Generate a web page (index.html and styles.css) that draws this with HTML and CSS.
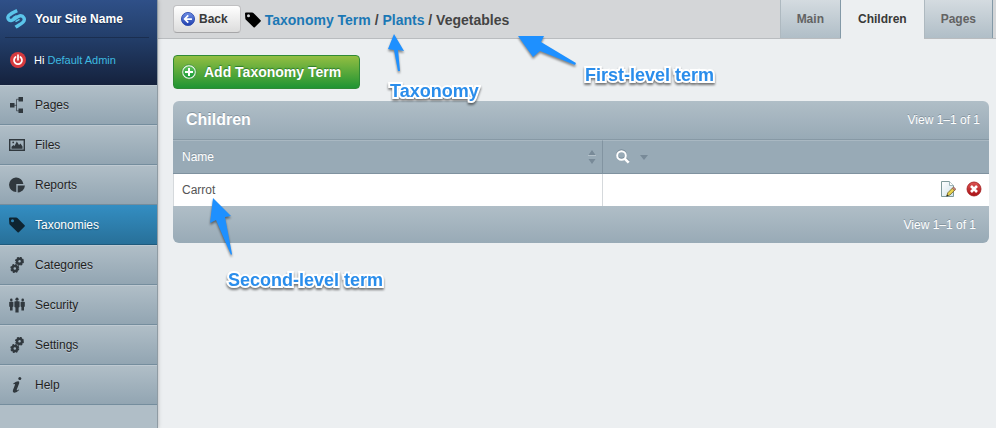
FILE: index.html
```html
<!DOCTYPE html>
<html lang="en">
<head>
<meta charset="utf-8">
<title>Vegetables - Taxonomies</title>
<link rel="stylesheet" href="styles.css">
</head>
<body>
<svg class="defs" aria-hidden="true">
  <defs>
    <linearGradient id="blueBall" x1="0" y1="0" x2="0" y2="1"><stop offset="0" stop-color="#6f8fe6"/><stop offset="1" stop-color="#1f3fae"/></linearGradient>
    <linearGradient id="redBall" x1="0" y1="0" x2="0" y2="1"><stop offset="0" stop-color="#dd5555"/><stop offset="1" stop-color="#a90f14"/></linearGradient>
    <linearGradient id="greenBall" x1="0" y1="0" x2="0" y2="1"><stop offset="0" stop-color="#5cc25c"/><stop offset="1" stop-color="#159a35"/></linearGradient>
    <linearGradient id="paper" x1="0" y1="0" x2="1" y2="1"><stop offset="0" stop-color="#ffffff"/><stop offset="1" stop-color="#cfe3ea"/></linearGradient>
    <symbol id="tag" viewBox="0 0 16 16"><path fill-rule="evenodd" d="M1 0.5h6.2q.7 0 1.2.5l7.2 7.2q.6.6 0 1.2l-5.8 5.9q-.6.6-1.2 0L.9 7.8Q.4 7.3.3 6.600L0 1.500Q0 .5 1 .5zM3.500 2.300a1.500 1.500 0 1 0 0 3a1.500 1.500 0 1 0 0-3z"/></symbol>
    <symbol id="gears" viewBox="0 0 16 16">
      <g fill="none" stroke="currentColor">
        <circle cx="10.500" cy="4.300" r="2.500" stroke-width="2.400"/>
        <circle cx="10.500" cy="4.300" r="3.800" stroke-width="1.400" stroke-dasharray="1.800 1.184"/>
        <circle cx="5.800" cy="11.500" r="2.500" stroke-width="2.400"/>
        <circle cx="5.800" cy="11.500" r="3.800" stroke-width="1.400" stroke-dasharray="1.800 1.184"/>
      </g>
    </symbol>
  </defs>
</svg>
<div class="app">
  <aside class="sidebar">
    <header class="brand-block">
      <a class="brand" href="#">
        <svg class="logo" viewBox="0 0 22 22" aria-hidden="true"><path d="M12.200 2.600C8.500 4.200 5.300 5.900 3.600 7.700C1.800 10.100 3.900 13.200 6.600 12.400C9.500 11.300 11.800 8.700 14.700 7.900C18.600 7.200 20.700 11.400 18.100 14.100C16.300 15.900 13 17.400 10.500 19.200" fill="none" stroke="#5bc5ea" stroke-width="3.400"/><path d="M7.800 9.900 11.600 7.600M10.500 13.700 14.600 11.300" fill="none" stroke="#5bc5ea" stroke-width="1.500"/></svg>
        <span>Your Site Name</span>
      </a>
      <div class="login">
        <a class="power-link" href="#" aria-label="Log out"><svg class="power" viewBox="0 0 16 16"><circle cx="8" cy="8" r="8" fill="#d63a3e"/><path d="M5.600 5a4 4 0 1 0 4.800 0M8 3.200v4.600" fill="none" stroke="#fff" stroke-width="1.700" stroke-linecap="round"/></svg></a>
        <span>Hi <a href="#">Default Admin</a></span>
      </div>
    </header>
    <nav>
      <ul class="menu">
        <li><a href="#"><svg viewBox="0 0 16 16"><path d="M1 6h4.500v4.500H1zM9.500 0H14v4.500H9.500zM9.500 11.500H14V16H9.500z"/><path d="M5 8.300h3M10 2.300H7.500v11.500H10" fill="none" stroke="currentColor" stroke-opacity=".7"/></svg>Pages</a></li>
        <li><a href="#"><svg viewBox="0 0 16 16"><path d="M.7 2.700h14.600v10.600H.7z" fill="none" stroke="currentColor" stroke-width="1.400"/><path d="M2.500 11.700v-2L4.500 8l1 1 2.300-4.500L10 8l1.500-1.500 2 3v2.200z"/><circle cx="4.200" cy="5.400" r=".9"/></svg>Files</a></li>
        <li><a href="#"><svg viewBox="0 0 16 16"><path d="M7.300 8V15A7.200 7.200 0 1 1 14.400 7.100H7.300z"/><path d="M8.700 8.600h7.200a7 7 0 0 1-2.200 4.900l-3 1.700-2 .4z"/></svg>Reports</a></li>
        <li class="current"><a href="#" aria-current="page"><svg><use href="#tag"/></svg>Taxonomies</a></li>
        <li><a href="#"><svg><use href="#gears"/></svg>Categories</a></li>
        <li><a href="#"><svg viewBox="0 0 16 16"><circle cx="2.300" cy="2.900" r="1.300"/><circle cx="8" cy="2.200" r="1.600"/><circle cx="13.700" cy="2.900" r="1.300"/><path d="M.2 5q2.100-1 4.200 0v4.600l-.8.400v3.500H1V10L.2 9.600zM5.400 4.600q2.600-1.200 5.200 0v5.400l-1 .5V15.500H6.400v-5l-1-.5zM11.600 5q2.100-1 4.200 0v4.600l-.8.400v3.500h-2.600V10l-.8-.4z"/></svg>Security</a></li>
        <li><a href="#"><svg><use href="#gears"/></svg>Settings</a></li>
        <li><a href="#"><svg viewBox="0 0 16 16"><circle cx="10.800" cy="1.500" r="1.500"/><path d="M4.200 6.600Q7.500 4.200 9.300 4.300q1.300.2.900 1.900L7.800 12.600q-.5 1.500 1.900-.2l.5.700Q7.500 16 5.200 15.800q-1.900-.3-1.300-2.500L6 7.700q.2-.9-1.500-.4z"/></svg>Help</a></li>
      </ul>
    </nav>
  </aside>

  <main class="content">
    <header class="topbar">
      <a class="back" href="#"><svg viewBox="0 0 16 16" aria-hidden="true"><circle cx="8" cy="8" r="7.500" fill="url(#blueBall)" stroke="#2d49ad"/><path d="M8.300 3.800 4.200 8l4.100 4.200M4.500 8h8" fill="none" stroke="#fff" stroke-width="2"/></svg>Back</a>
      <svg class="crumb-icon" aria-hidden="true"><use href="#tag"/></svg>
      <h2 class="crumbs"><a href="#">Taxonomy Term</a> / <a href="#">Plants</a> / <span>Vegetables</span></h2>
      <nav class="tabs">
        <a href="#">Main</a>
        <a class="active" href="#" aria-current="page">Children</a>
        <a href="#">Pages</a>
      </nav>
    </header>

    <section class="panel">
      <button class="add" type="button"><svg viewBox="0 0 16 16" aria-hidden="true"><circle cx="8" cy="8" r="7.300" fill="#e8f6e3" stroke="#3a8a3a" stroke-width=".8"/><circle cx="8" cy="8" r="5.800" fill="url(#greenBall)"/><path d="M8 4v8M4 8h8" stroke="#fff" stroke-width="2"/></svg>Add Taxonomy Term</button>

      <table class="grid">
        <colgroup><col class="col-name"><col></colgroup>
        <thead>
          <tr class="title"><th colspan="2"><div class="bar"><h3>Children</h3><span>View 1–1 of 1</span></div></th></tr>
          <tr class="heads">
            <th><button class="sort" type="button">Name<svg viewBox="0 0 8 14" aria-hidden="true"><path d="M4 0l3.500 5h-7zM4 14l3.500-5h-7z" fill="#788a98"/><path d="M0 5.500h8" stroke="#b4c1ca"/></svg></button></th>
            <th><button class="search" type="button" aria-label="Filter"><svg class="lens" viewBox="0 0 14 14"><circle cx="5.500" cy="5.500" r="4.300" fill="none" stroke="#fff" stroke-width="2"/><path d="M8.700 8.700l4 4" stroke="#fff" stroke-width="2.600"/></svg><svg class="caret" viewBox="0 0 8 5"><path d="M0 0h8L4 5z" fill="#788a98"/></svg></button></th>
          </tr>
        </thead>
        <tbody>
          <tr>
            <td>Carrot</td>
            <td><div class="actions">
              <a href="#" aria-label="Edit"><svg viewBox="0 0 16 16"><path d="M1.500.5h8l4 4v11h-12z" fill="url(#paper)" stroke="#7e9a9a"/><path d="M9.500.5v4h4" fill="#fff" stroke="#9db5b8"/><path d="M6.800 15l1-3.200L13 6.600l2.200 2.100L9.900 14z" fill="#e8d44d" stroke="#7a6a2b" stroke-width=".9"/><path d="M12.300 7.300L13.600 6l2.200 2-1.400 1.500z" fill="#c98579" stroke="#85564e" stroke-width=".6"/><path d="M6.500 15.500l.6-2 1.300 1.300z" fill="#222"/></svg></a>
              <button type="button" aria-label="Delete"><svg viewBox="0 0 16 16"><circle cx="8" cy="8" r="7" fill="url(#redBall)" stroke="#a01818" stroke-width=".8"/><path d="M5 5l6 6M11 5l-6 6" stroke="#fff" stroke-width="2.600"/></svg></button>
            </div></td>
          </tr>
        </tbody>
        <tfoot><tr><td colspan="2">View 1–1 of 1</td></tr></tfoot>
      </table>
    </section>
  </main>

  <div class="notes">
    <svg class="arrows" aria-hidden="true">
      <path d="M394 34l10 17-6-1 2 21h-2l-4-21-6-1z"/>
      <path d="M518 36l26 0-3 6 35 21-1 2-35-14-7 6z"/>
      <path d="M213 198l18 18-6 1 7 37-1 1-15-35-6 3z"/>
    </svg>
    <span class="note note-taxonomy">Taxonomy</span>
    <span class="note note-first">First-level term</span>
    <span class="note note-second">Second-level term</span>
  </div>
</div>
</body>
</html>
```

FILE: styles.css
```css
* { box-sizing: border-box; }

body {
  margin: 0;
  background: #eceff1;
  color: #444;
  font: 12px/16px "Liberation Sans", Arial, sans-serif;
}

a { color: inherit; text-decoration: none; }
h2, h3, ul { margin: 0; padding: 0; }
button { font: inherit; color: inherit; border: 0; background: none; padding: 0; cursor: pointer; }
svg { display: block; flex: none; width: 16px; height: 16px; fill: currentColor; }
.defs { position: absolute; width: 0; height: 0; }

.app { position: relative; display: flex; min-height: 100vh; overflow: hidden; }

/* Sidebar */
.sidebar {
  flex: none;
  width: 158px;
  background: #b0bec7;
  border-right: 1px solid #8f9ba3;
  box-shadow: 0 0 4px rgba(0, 0, 0, .25);
  z-index: 1;
}
.brand-block { background: linear-gradient(#2f5088, #24406d 40%, #15223d); }
.brand {
  display: flex;
  align-items: center;
  gap: 8px;
  height: 38px;
  margin: 0 8px 0 5px;
  border-bottom: 1px solid #1a2e50;
  color: #fff;
  font-weight: bold;
  text-shadow: 0 1px 1px #16294a;
}
.logo { width: 22px; height: 22px; }
.login {
  display: flex;
  align-items: center;
  gap: 8px;
  height: 47px;
  padding: 0 0 4px 10px;
  color: #fff;
  font-size: 11px;
}
.login span a { color: #3ebae0; }

.menu { list-style: none; }
.menu a {
  display: flex;
  align-items: center;
  gap: 10px;
  height: 40px;
  padding-left: 9px;
  background: linear-gradient(#b0bec7, #92a5b2);
  border-top: 1px solid #bfcad2;
  border-bottom: 1px solid #748d9d;
  color: #1f1f1f;
  text-shadow: 0 1px 0 #bfcad2;
}
.menu svg { color: #30383e; }
.menu .current a {
  background: linear-gradient(#338dc1, #287099);
  border-top-color: #338dc1;
  border-bottom-color: #1f5a7c;
  color: #fff;
  text-shadow: 0 1px 1px #1e5270;
}
.menu .current svg { color: #0e2431; }

/* Header */
.content { flex: 1; min-width: 0; }
.topbar {
  display: flex;
  align-items: center;
  height: 39px;
  padding: 0 3px 0 15px;
  background: #d4d6d8;
  border-bottom: 1px solid #b9bcbf;
}
.back {
  display: flex;
  align-items: center;
  gap: 4px;
  height: 28px;
  padding: 0 12px 0 7px;
  border: 1px solid #c0c0c2;
  border-bottom-color: #a6a6a8;
  border-radius: 4px;
  background: linear-gradient(#fff, #dcdcdc);
  color: #393939;
  font-weight: bold;
}
.back svg { width: 14px; height: 14px; }
.crumb-icon { margin: 2px 4px 0; color: #000; }
.crumbs { flex: 1; padding-top: 2px; font-size: 14px; white-space: nowrap; color: #444; }
.crumbs a { color: #1b78b5; }
.tabs { display: flex; align-self: stretch; }
.tabs a {
  height: 38px;
  padding: 0 16px;
  border-left: 1px solid #aeb9c0;
  border-right: 1px solid #8399a7;
  background: linear-gradient(#d4dbe0, #b0bec7);
  color: #636363;
  font-weight: bold;
  line-height: 38px;
}
.tabs .active {
  height: 39px;
  border-color: #eceff1;
  background: #eceff1;
  color: #393939;
}

/* Body */
.panel { padding: 16px 7px 0 15px; }
.add {
  display: flex;
  align-items: center;
  gap: 7px;
  height: 34px;
  margin-bottom: 12px;
  padding: 0 18px 0 7px;
  border: 1px solid #2f8a35;
  border-radius: 4px;
  background: linear-gradient(#93be42, #1f9433);
  color: #fff;
  font-size: 14px;
  font-weight: bold;
  text-shadow: 0 -1px 1px #2b7a2b;
}

.grid {
  width: 100%;
  table-layout: fixed;
  border-collapse: separate;
  border-spacing: 0;
  border-radius: 6px;
  overflow: hidden;
  text-align: left;
}
.col-name { width: 52.7%; }
.grid th, .grid td { padding: 0 9px; font-weight: normal; }
.title th {
  height: 39px;
  border-bottom: 1px solid #8799a5;
  background: linear-gradient(#b0bec7, #98aab6);
}
.bar {
  display: flex;
  align-items: center;
  justify-content: space-between;
  padding-left: 4px;
  color: #fff;
  text-shadow: 0 -1px 0 #84949f;
}
.bar h3 { font-size: 16px; }
.heads th {
  height: 34px;
  border-top: 1px solid #a9b8c2;
  border-bottom: 1px solid #7f929f;
  background: #98aab6;
  color: #fff;
}
.heads th:first-child { border-right: 1px solid #8294a1; }
.sort {
  display: flex;
  align-items: center;
  justify-content: space-between;
  width: 100%;
  text-shadow: 0 -1px 0 #84949f;
}
.sort svg { width: 8px; height: 14px; margin-right: -3px; }
.search { display: flex; align-items: center; gap: 10px; padding-left: 4px; }
.lens { width: 14px; height: 14px; filter: drop-shadow(0 -1px 0 #788a98); }
.caret { width: 8px; height: 5px; }
.grid tbody td { height: 32px; background: #fff; color: #555; }
.grid tbody td:first-child { border-right: 1px solid #d5d9dc; border-left: 1px solid #d5d9dc; padding-left: 8px; }
.actions { display: flex; justify-content: flex-end; gap: 10px; margin-right: -2px; padding-bottom: 3px; }
.grid tfoot td {
  height: 37px;
  padding-right: 13px;
  background: linear-gradient(#b0bec7, #98aab6);
  color: #fff;
  text-align: right;
  text-shadow: 0 -1px 0 #84949f;
}

/* Callouts drawn over the page */
.notes { position: absolute; inset: 0; z-index: 2; pointer-events: none; }
.arrows {
  width: 100%;
  height: 100%;
  fill: #1e90ff;
  filter: drop-shadow(0 2px 1px rgba(0, 0, 0, .45));
}
.note {
  position: absolute;
  color: #2a8deb;
  font-size: 18px;
  font-weight: bold;
  line-height: 20px;
  white-space: nowrap;
  -webkit-text-stroke: 4px #fff;
  paint-order: stroke fill;
  filter: drop-shadow(0 2px 1px rgba(0, 0, 0, .5));
}
.note-taxonomy { left: 390px; top: 81px; }
.note-first { left: 585px; top: 65px; }
.note-second { left: 228px; top: 270px; }
```
